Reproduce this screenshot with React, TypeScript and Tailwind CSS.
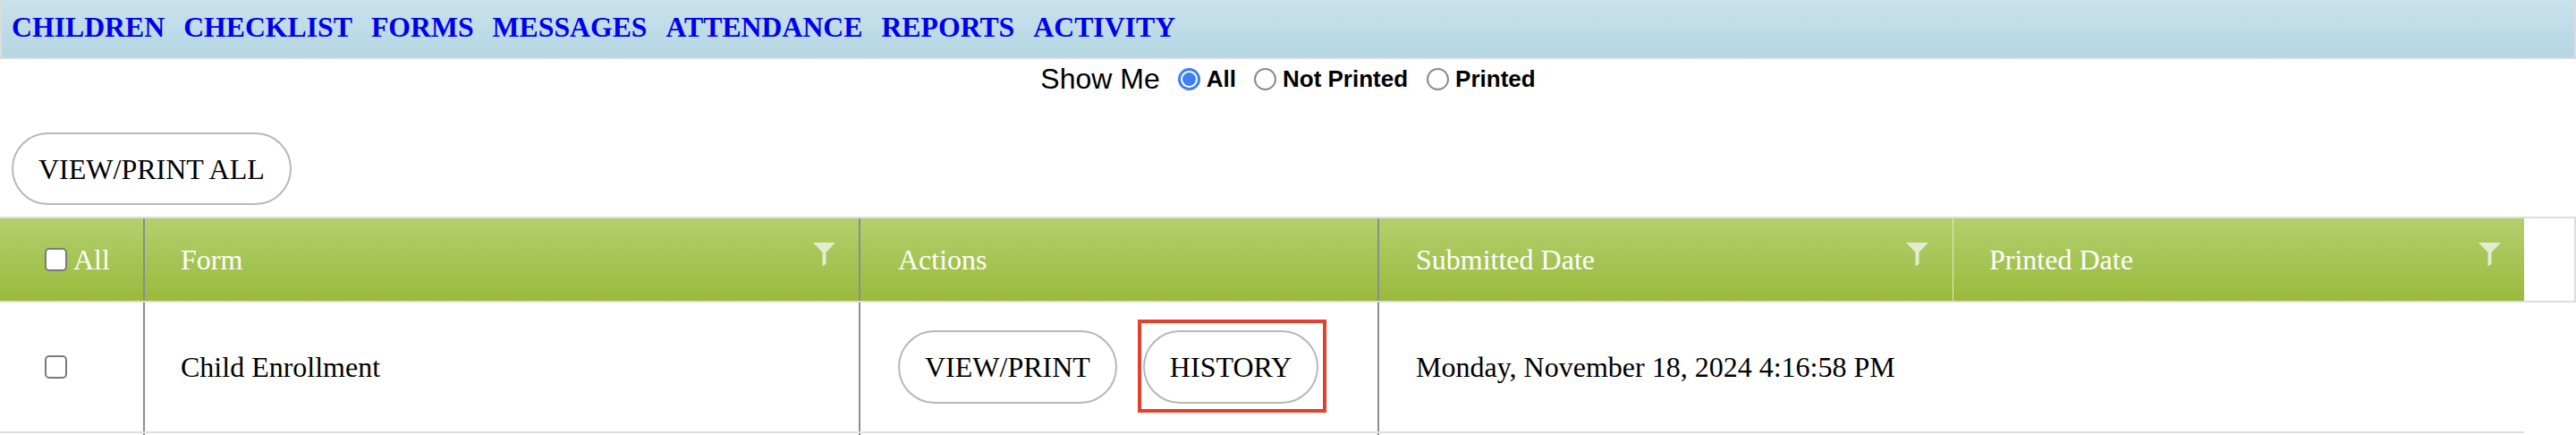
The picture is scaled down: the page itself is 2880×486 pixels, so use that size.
import React from "react";

const serif = { fontFamily: '"Liberation Serif", "Times New Roman", serif' };
const sans = { fontFamily: '"Liberation Sans", Arial, sans-serif' };

function Funnel() {
  return (
    <svg width="25" height="27" viewBox="0 0 25 27" className="mb-[12px] shrink-0">
      <path d="M0 0 H25 L14.5 11 V24 L10.5 26.5 V11 Z" fill="#e3ecce" />
    </svg>
  );
}

function Radio({ checked }: { checked?: boolean }) {
  if (checked) {
    return (
      <span className="flex h-[25px] w-[25px] shrink-0 items-center justify-center rounded-full bg-[#3d7ff5]">
        <span className="flex h-[19px] w-[19px] items-center justify-center rounded-full bg-white">
          <span className="block h-[15px] w-[15px] rounded-full bg-[#3d7ff5]" />
        </span>
      </span>
    );
  }
  return <span className="block h-[25px] w-[25px] shrink-0 rounded-full border-2 border-[#8a8a8a] bg-white" />;
}

function Checkbox() {
  return <span className="block h-[26px] w-[25px] shrink-0 rounded-[5px] border-2 border-[#7a7a7a] bg-white" />;
}

function PillButton({ children }: { children: React.ReactNode }) {
  return (
    <span
      className="flex h-[82px] items-center rounded-full border-2 border-[#b8b8b8] bg-white px-[28px] text-[32px] text-black"
      style={serif}
    >
      {children}
    </span>
  );
}

export default function App() {
  const navItems = ["CHILDREN", "CHECKLIST", "FORMS", "MESSAGES", "ATTENDANCE", "REPORTS", "ACTIVITY"];
  return (
    <div className="h-[486px] w-[2880px] overflow-hidden bg-white">
      {/* Nav bar */}
      <div className="flex h-[66px] items-center gap-[21px] border-x-2 border-b-2 border-[#dcdcdc] bg-gradient-to-b from-[#c9e2ec] to-[#b4d6e2] pb-[2px] pl-[11px]">
        {navItems.map((n) => (
          <span key={n} className="text-[31.75px] font-bold leading-none text-[#0000ee]" style={serif}>
            {n}
          </span>
        ))}
      </div>

      {/* Show Me */}
      <div className="flex h-[44px] items-center justify-center text-black" style={sans}>
        <span className="text-[32px] leading-none">Show Me</span>
        <span className="ml-[20px] flex">
          <Radio checked />
        </span>
        <span className="ml-[7px] text-[26px] font-bold leading-none">All</span>
        <span className="ml-[20px] flex">
          <Radio />
        </span>
        <span className="ml-[7px] text-[26px] font-bold leading-none">Not Printed</span>
        <span className="ml-[21px] flex">
          <Radio />
        </span>
        <span className="ml-[7px] text-[26px] font-bold leading-none">Printed</span>
      </div>

      {/* View/Print All */}
      <div className="mt-[38px] flex pl-[13px]">
        <span
          className="flex h-[81px] items-center rounded-full border-2 border-[#b8b8b8] bg-white px-[28px] text-[32px] text-black"
          style={serif}
        >
          VIEW/PRINT ALL
        </span>
      </div>

      {/* Table header */}
      <div className="mt-[13px] flex h-[96px] border-y-2 border-r-2 border-[#dddddd]">
        <div
          className="flex h-full w-[2822px] bg-gradient-to-b from-[#b4cf6d] to-[#99ba3b] text-[32px] text-white"
          style={serif}
        >
          <div className="flex w-[160px] items-center pl-[50px]">
            <Checkbox />
            <span className="ml-[7px]">All</span>
          </div>
          <div className="flex w-[800px] items-center justify-between border-l-2 border-[#8c8c8c] pl-[40px] pr-[26px]">
            <span>Form</span>
            <Funnel />
          </div>
          <div className="flex w-[580px] items-center border-l-2 border-[#8c8c8c] pl-[42px]">
            <span>Actions</span>
          </div>
          <div className="flex w-[643px] items-center justify-between border-l-2 border-[#8c8c8c] pl-[41px] pr-[27px]">
            <span>Submitted Date</span>
            <Funnel />
          </div>
          <div className="flex w-[639px] items-center justify-between border-l border-[#e0ebc9] pl-[40px] pr-[26px]">
            <span>Printed Date</span>
            <Funnel />
          </div>
        </div>
        <div className="flex-1 bg-white" />
      </div>

      {/* Body row */}
      <div className="flex h-[146px] w-[2822px] border-b-2 border-[#dddddd] text-[32px] text-black" style={serif}>
        <div className="flex w-[160px] items-center pl-[50px]">
          <Checkbox />
        </div>
        <div className="flex w-[800px] items-center border-l-2 border-[#8c8c8c] pl-[40px]">
          Child Enrollment
        </div>
        <div className="flex w-[580px] items-center gap-[29px] border-l-2 border-[#8c8c8c] pl-[42px]">
          <PillButton>VIEW/PRINT</PillButton>
          <span className="relative flex">
            <PillButton>HISTORY</PillButton>
            <span className="pointer-events-none absolute bottom-[-10px] left-[-6px] right-[-9px] top-[-12px] border-[4px] border-[#e4402b]" />
          </span>
        </div>
        <div className="flex w-[643px] items-center border-l-2 border-[#8c8c8c] pl-[41px]">
          Monday, November 18, 2024 4:16:58 PM
        </div>
        <div className="w-[639px]" />
      </div>

      {/* Next row (cut off) */}
      <div className="flex h-[146px] w-[2822px]">
        <div className="w-[160px]" />
        <div className="w-[800px] border-l-2 border-[#8c8c8c]" />
        <div className="w-[580px] border-l-2 border-[#8c8c8c]" />
        <div className="w-[643px] border-l-2 border-[#8c8c8c]" />
      </div>
    </div>
  );
}
